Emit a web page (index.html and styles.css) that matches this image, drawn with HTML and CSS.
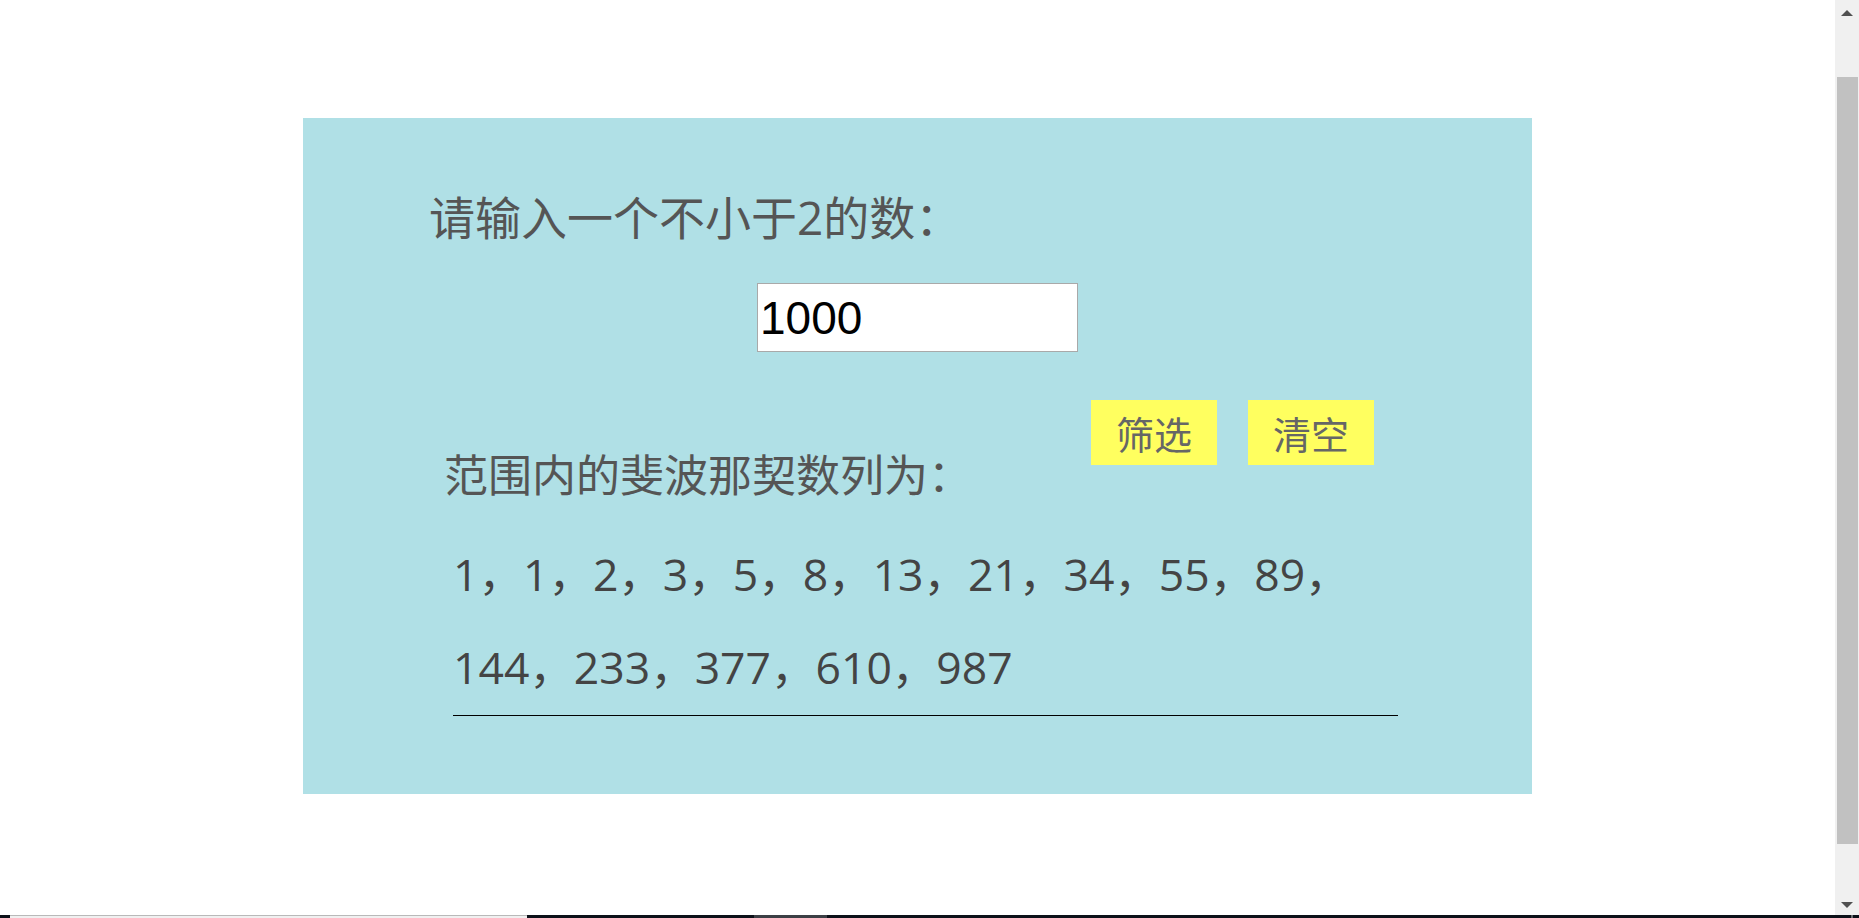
FILE: index.html
```html
<!DOCTYPE html>
<html lang="zh-CN">
<head>
<meta charset="utf-8">
<title>斐波那契数列</title>
<link rel="stylesheet" href="styles.css">
</head>
<body>
<div class="screen">
  <div class="viewport">
    <main class="page">
      <section class="panel">
        <h1 class="prompt">请输入一个不小于2的数：</h1>
        <input class="num-input" type="text" value="1000">
        <div class="result-head">
          <h2 class="result-title">范围内的斐波那契数列为：</h2>
          <div class="actions">
            <button class="btn" type="button">筛选</button>
            <button class="btn" type="button">清空</button>
          </div>
        </div>
        <div class="result">
          <p class="seq">1，1，2，3，5，8，13，21，34，55，89，144，233，377，610，987</p>
        </div>
      </section>
    </main>
    <div class="vscroll">
      <div class="sb-btn"><span class="arrow-up"></span></div>
      <div class="sb-track"><div class="sb-thumb"></div></div>
      <div class="sb-btn sb-btn-down"><span class="arrow-down"></span></div>
    </div>
  </div>
  <div class="strip">
    <div class="strip-dark-start"></div>
    <div class="strip-light"></div>
    <div class="strip-dark">
      <div class="strip-seg"></div>
      <div class="strip-tick"></div>
    </div>
  </div>
</div>
</body>
</html>
```
FILE: styles.css
```css
html, body {
  margin: 0;
  padding: 0;
  background: #ffffff;
}

.screen {
  width: 1859px;
  height: 918px;
  display: flex;
  flex-direction: column;
  overflow: hidden;
}

.viewport {
  height: 915px;
  display: flex;
}

.page {
  flex: 1;
  padding-top: 118px;
  background: #ffffff;
}

.panel {
  width: 1229px;
  height: 676px;
  margin: 0 auto;
  background: #b0e0e6;
  box-sizing: border-box;
  padding-top: 69px;
  display: flex;
  flex-direction: column;
  font-family: "Open Sans", "Noto Sans CJK SC", sans-serif;
}

.prompt {
  margin: 0 0 0 126px;
  font-size: 46px;
  line-height: 60px;
  font-weight: 400;
  color: #555555;
}

.num-input {
  align-self: center;
  margin-top: 36px;
  width: 321px;
  height: 69px;
  box-sizing: border-box;
  border: 1px solid #a9a9a9;
  padding: 0 2px;
  background: #ffffff;
  font-family: "Liberation Sans", Arial, sans-serif;
  font-size: 46px;
  color: #000000;
  outline: none;
}

.result-head {
  margin-top: 48px;
  display: flex;
  align-items: flex-start;
  padding-right: 158px;
}

.result-title {
  margin: 45px 0 0 141px;
  font-size: 44px;
  line-height: 60px;
  font-weight: 400;
  color: #555555;
}

.actions {
  margin-left: auto;
  display: flex;
  gap: 31px;
}

.btn {
  width: 126px;
  height: 65px;
  padding: 0;
  border: none;
  background: #ffff5f;
  color: #666666;
  font-family: "Noto Sans CJK SC", sans-serif;
  font-size: 38px;
  line-height: 65px;
  display: flex;
  align-items: center;
  justify-content: center;
}

.result {
  margin: 22px 0 0 150px;
  width: 945px;
  padding-bottom: 2px;
  border-bottom: 1px solid #000000;
}

.seq {
  margin: 0;
  font-size: 44.5px;
  line-height: 93px;
  color: #444444;
}

/* window scrollbar */
.vscroll {
  width: 24px;
  background: #f0f0f0;
  display: flex;
  flex-direction: column;
}

.sb-btn {
  height: 24px;
  display: flex;
  justify-content: center;
  align-items: flex-start;
  padding-top: 10px;
  box-sizing: border-box;
}

.sb-btn-down {
  padding-top: 11px;
}

.arrow-up {
  width: 0;
  height: 0;
  border-left: 6px solid transparent;
  border-right: 6px solid transparent;
  border-bottom: 6px solid #505050;
}

.arrow-down {
  width: 0;
  height: 0;
  border-left: 6px solid transparent;
  border-right: 6px solid transparent;
  border-top: 6px solid #505050;
}

.sb-track {
  flex: 1;
  padding: 53px 1px 0 2px;
}

.sb-thumb {
  height: 767px;
  background: #c1c1c1;
}

/* bottom edge strip */
.strip {
  height: 3px;
  display: flex;
}

.strip-dark-start {
  width: 10px;
  background: #0c1018;
}

.strip-light {
  width: 517px;
  box-sizing: border-box;
  background: #f0f0f0;
  border-top: 1px solid #b9b9b9;
}

.strip-dark {
  flex: 1;
  background: #0c1018;
  display: flex;
}

.strip-seg {
  margin-left: 227px;
  width: 73px;
  background: #3c3f45;
}

.strip-tick {
  margin-left: 1024px;
  width: 2px;
  background: #6a6d72;
}
```
